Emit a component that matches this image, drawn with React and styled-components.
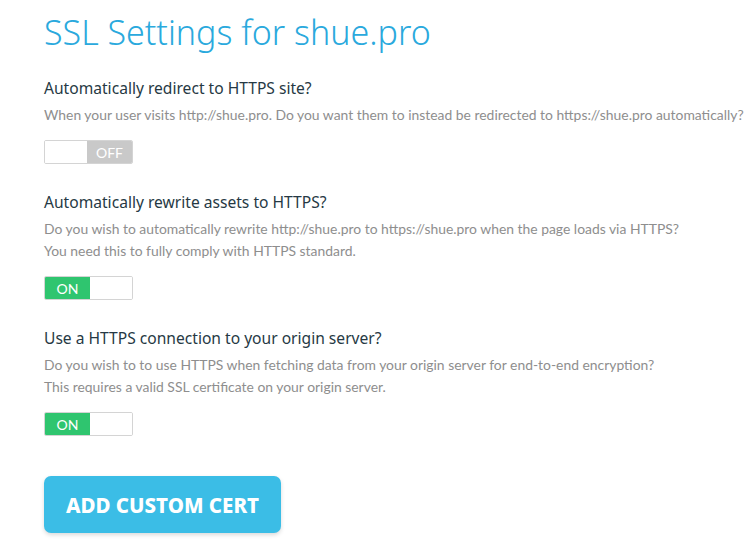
import React from "react";
import styled, { createGlobalStyle } from "styled-components";

const Global = createGlobalStyle`
  html, body { margin: 0; padding: 0; background: #ffffff; }
  body { width: 756px; height: 550px; overflow: hidden; }
`;

const Page = styled.div`
  padding: 10px 0 0 44px;
  display: flex;
  flex-direction: column;
  align-items: flex-start;
`;

const Title = styled.h1`
  margin: 0 0 22px 0;
  font-family: "Noto Sans", sans-serif;
  font-weight: 300;
  font-size: 34px;
  line-height: 44px;
  color: #2aa9dd;
  letter-spacing: 0;
`;

const Section = styled.section`
  display: flex;
  flex-direction: column;
  align-items: flex-start;
  margin-bottom: 26px;
`;

const Heading = styled.h2`
  margin: 0 0 4px 0;
  font-family: "Noto Sans", sans-serif;
  font-weight: 400;
  font-size: 15.6px;
  line-height: 24px;
  color: #263944;
`;

const Desc = styled.p`
  margin: 0 0 14px 0;
  font-family: Lato, sans-serif;
  font-size: 13.9px;
  line-height: 22px;
  color: #8e8e8e;
  white-space: nowrap;
`;

const Toggle = styled.div`
  display: flex;
  width: 89px;
  height: 24px;
  box-sizing: border-box;
  border: 1px solid #d4d4d4;
  border-radius: 2px;
  overflow: hidden;
  flex-direction: ${(p) => (p.$on ? "row" : "row-reverse")};
`;

const Label = styled.div`
  width: 45px;
  display: flex;
  align-items: center;
  justify-content: center;
  background: ${(p) => (p.$on ? "#2fc56f" : "#c9c9c9")};
  color: #ffffff;
  font-family: Lato, sans-serif;
  font-size: 14px;
  font-weight: 400;
`;

const Knob = styled.div`
  flex: 1;
  background: #ffffff;
`;

const Button = styled.button`
  margin-top: 14px;
  width: 237px;
  height: 57px;
  border: none;
  border-radius: 7px;
  background: #3bbde6;
  color: #ffffff;
  font-family: "Noto Sans", sans-serif;
  font-weight: 800;
  font-size: 20.5px;
  box-shadow: 0 2px 4px rgba(0, 0, 0, 0.15);
  cursor: pointer;
`;

const sections = [
  {
    title: "Automatically redirect to HTTPS site?",
    desc: [
      "When your user visits http://shue.pro. Do you want them to instead be redirected to https://shue.pro automatically?",
    ],
    on: false,
  },
  {
    title: "Automatically rewrite assets to HTTPS?",
    desc: [
      "Do you wish to automatically rewrite http://shue.pro to https://shue.pro when the page loads via HTTPS?",
      "You need this to fully comply with HTTPS standard.",
    ],
    on: true,
  },
  {
    title: "Use a HTTPS connection to your origin server?",
    desc: [
      "Do you wish to to use HTTPS when fetching data from your origin server for end-to-end encryption?",
      "This requires a valid SSL certificate on your origin server.",
    ],
    on: true,
  },
];

export default function App() {
  return (
    <>
      <Global />
      <Page>
        <Title>SSL Settings for shue.pro</Title>
        {sections.map((s) => (
          <Section key={s.title}>
            <Heading>{s.title}</Heading>
            <Desc>
              {s.desc.map((d, i) => (
                <React.Fragment key={i}>
                  {i > 0 && <br />}
                  {d}
                </React.Fragment>
              ))}
            </Desc>
            <Toggle $on={s.on}>
              <Label $on={s.on}>{s.on ? "ON" : "OFF"}</Label>
              <Knob />
            </Toggle>
          </Section>
        ))}
        <Button>ADD CUSTOM CERT</Button>
      </Page>
    </>
  );
}
